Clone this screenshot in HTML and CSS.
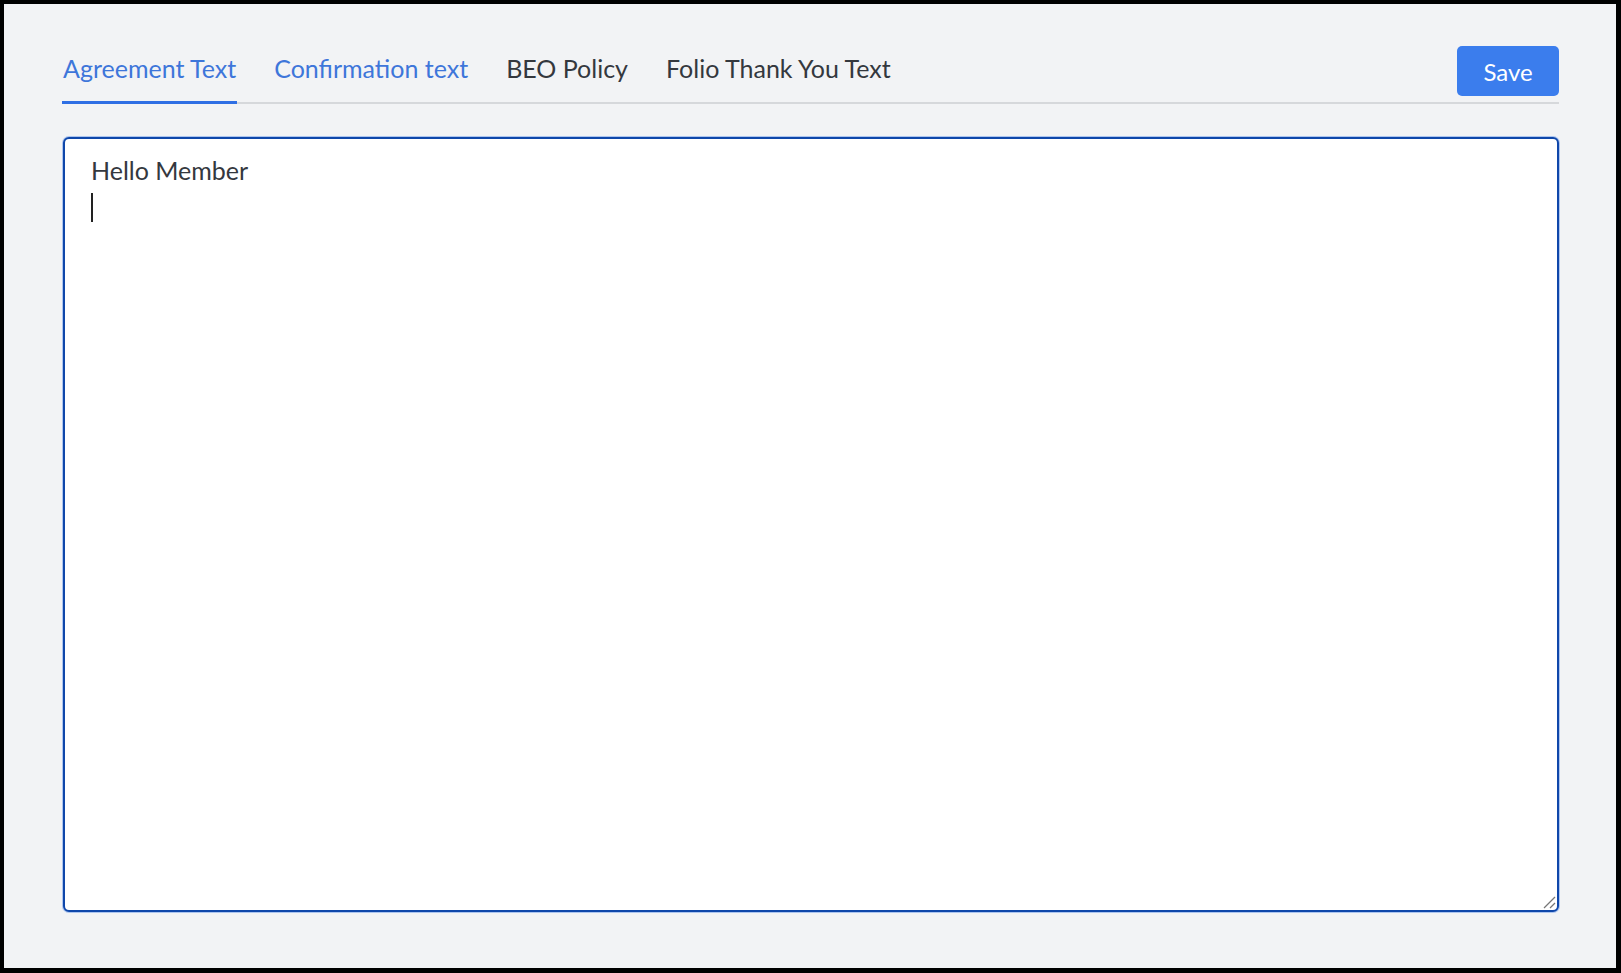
FILE: index.html
```html
<!DOCTYPE html>
<html lang="en">
<head>
    <meta charset="UTF-8">
    <meta name="viewport" content="width=device-width, initial-scale=1.0">
    <title>Policy Texts</title>
    <link rel="stylesheet" href="styles.css">
</head>
<body>
    <div class="screen">
        <div class="tabbar">
            <nav class="tabs">
                <span class="tab active">Agreement Text</span>
                <span class="tab hover">Confirmation text</span>
                <span class="tab">BEO Policy</span>
                <span class="tab">Folio Thank You Text</span>
            </nav>
            <button class="btn-save">Save</button>
        </div>

        <!-- editor box, focused, caret on the empty second line -->
        <div class="editor">
            <div class="editor-line">Hello Member</div>
            <div class="editor-line"><span class="caret"></span></div>
            <svg class="grip" width="14" height="14" viewBox="0 0 14 14">
                <line x1="2" y1="13" x2="13" y2="2" />
                <line x1="8" y1="13" x2="13" y2="8" />
            </svg>
        </div>
    </div>
</body>
</html>
```

FILE: styles.css
```css
:root {
    --bg: #f2f3f5;
    --blue: #3b7ded;
    --tab-blue: #3e76da;
    --focus: #0f47aa;
    --text: #34383e;
    --line: #d6d8db;
}

* {
    margin: 0;
    padding: 0;
    box-sizing: border-box;
}

body {
    background: #000;
    font-family: Lato, 'Open Sans', sans-serif;
    color: var(--text);
    overflow: hidden;
}

.screen {
    margin: 4px 5px 5px 4px;
    height: 964px;
    background: var(--bg);
    padding: 42px 57px 0 59px;
}

.tabbar {
    display: flex;
    align-items: flex-end;
    justify-content: space-between;
    border-bottom: 2px solid var(--line);
}

.tabs {
    display: flex;
    gap: 38px;
}

.tab {
    font-size: 25px;
    line-height: 30px;
    padding: 0 1px 18px;
    border-bottom: 3px solid transparent;
    margin: 0 -1px -2px;
    color: var(--text);
    cursor: pointer;
}

.tab.active,
.tab.hover {
    color: var(--tab-blue);
}

.tab.active {
    border-bottom-color: #2f6fe4;
}

.btn-save {
    width: 102px;
    height: 50px;
    margin-bottom: 6px;
    background: var(--blue);
    color: #fff;
    border: none;
    border-radius: 5px;
    font-family: inherit;
    font-size: 24px;
    cursor: pointer;
}

.editor {
    position: relative;
    margin-top: 33px;
    height: 775px;
    background: #fff;
    border: 2px solid var(--focus);
    border-radius: 6px;
    box-shadow: 0 0 0 1px rgba(47, 111, 228, 0.35);
    padding: 13px 26px;
    font-size: 25px;
    line-height: 36px;
}

.caret {
    display: inline-block;
    width: 2px;
    height: 29px;
    background: #222;
    vertical-align: -6px;
}

.grip {
    position: absolute;
    right: 1px;
    bottom: 1px;
    stroke: #777;
    stroke-width: 1.2;
}
```
